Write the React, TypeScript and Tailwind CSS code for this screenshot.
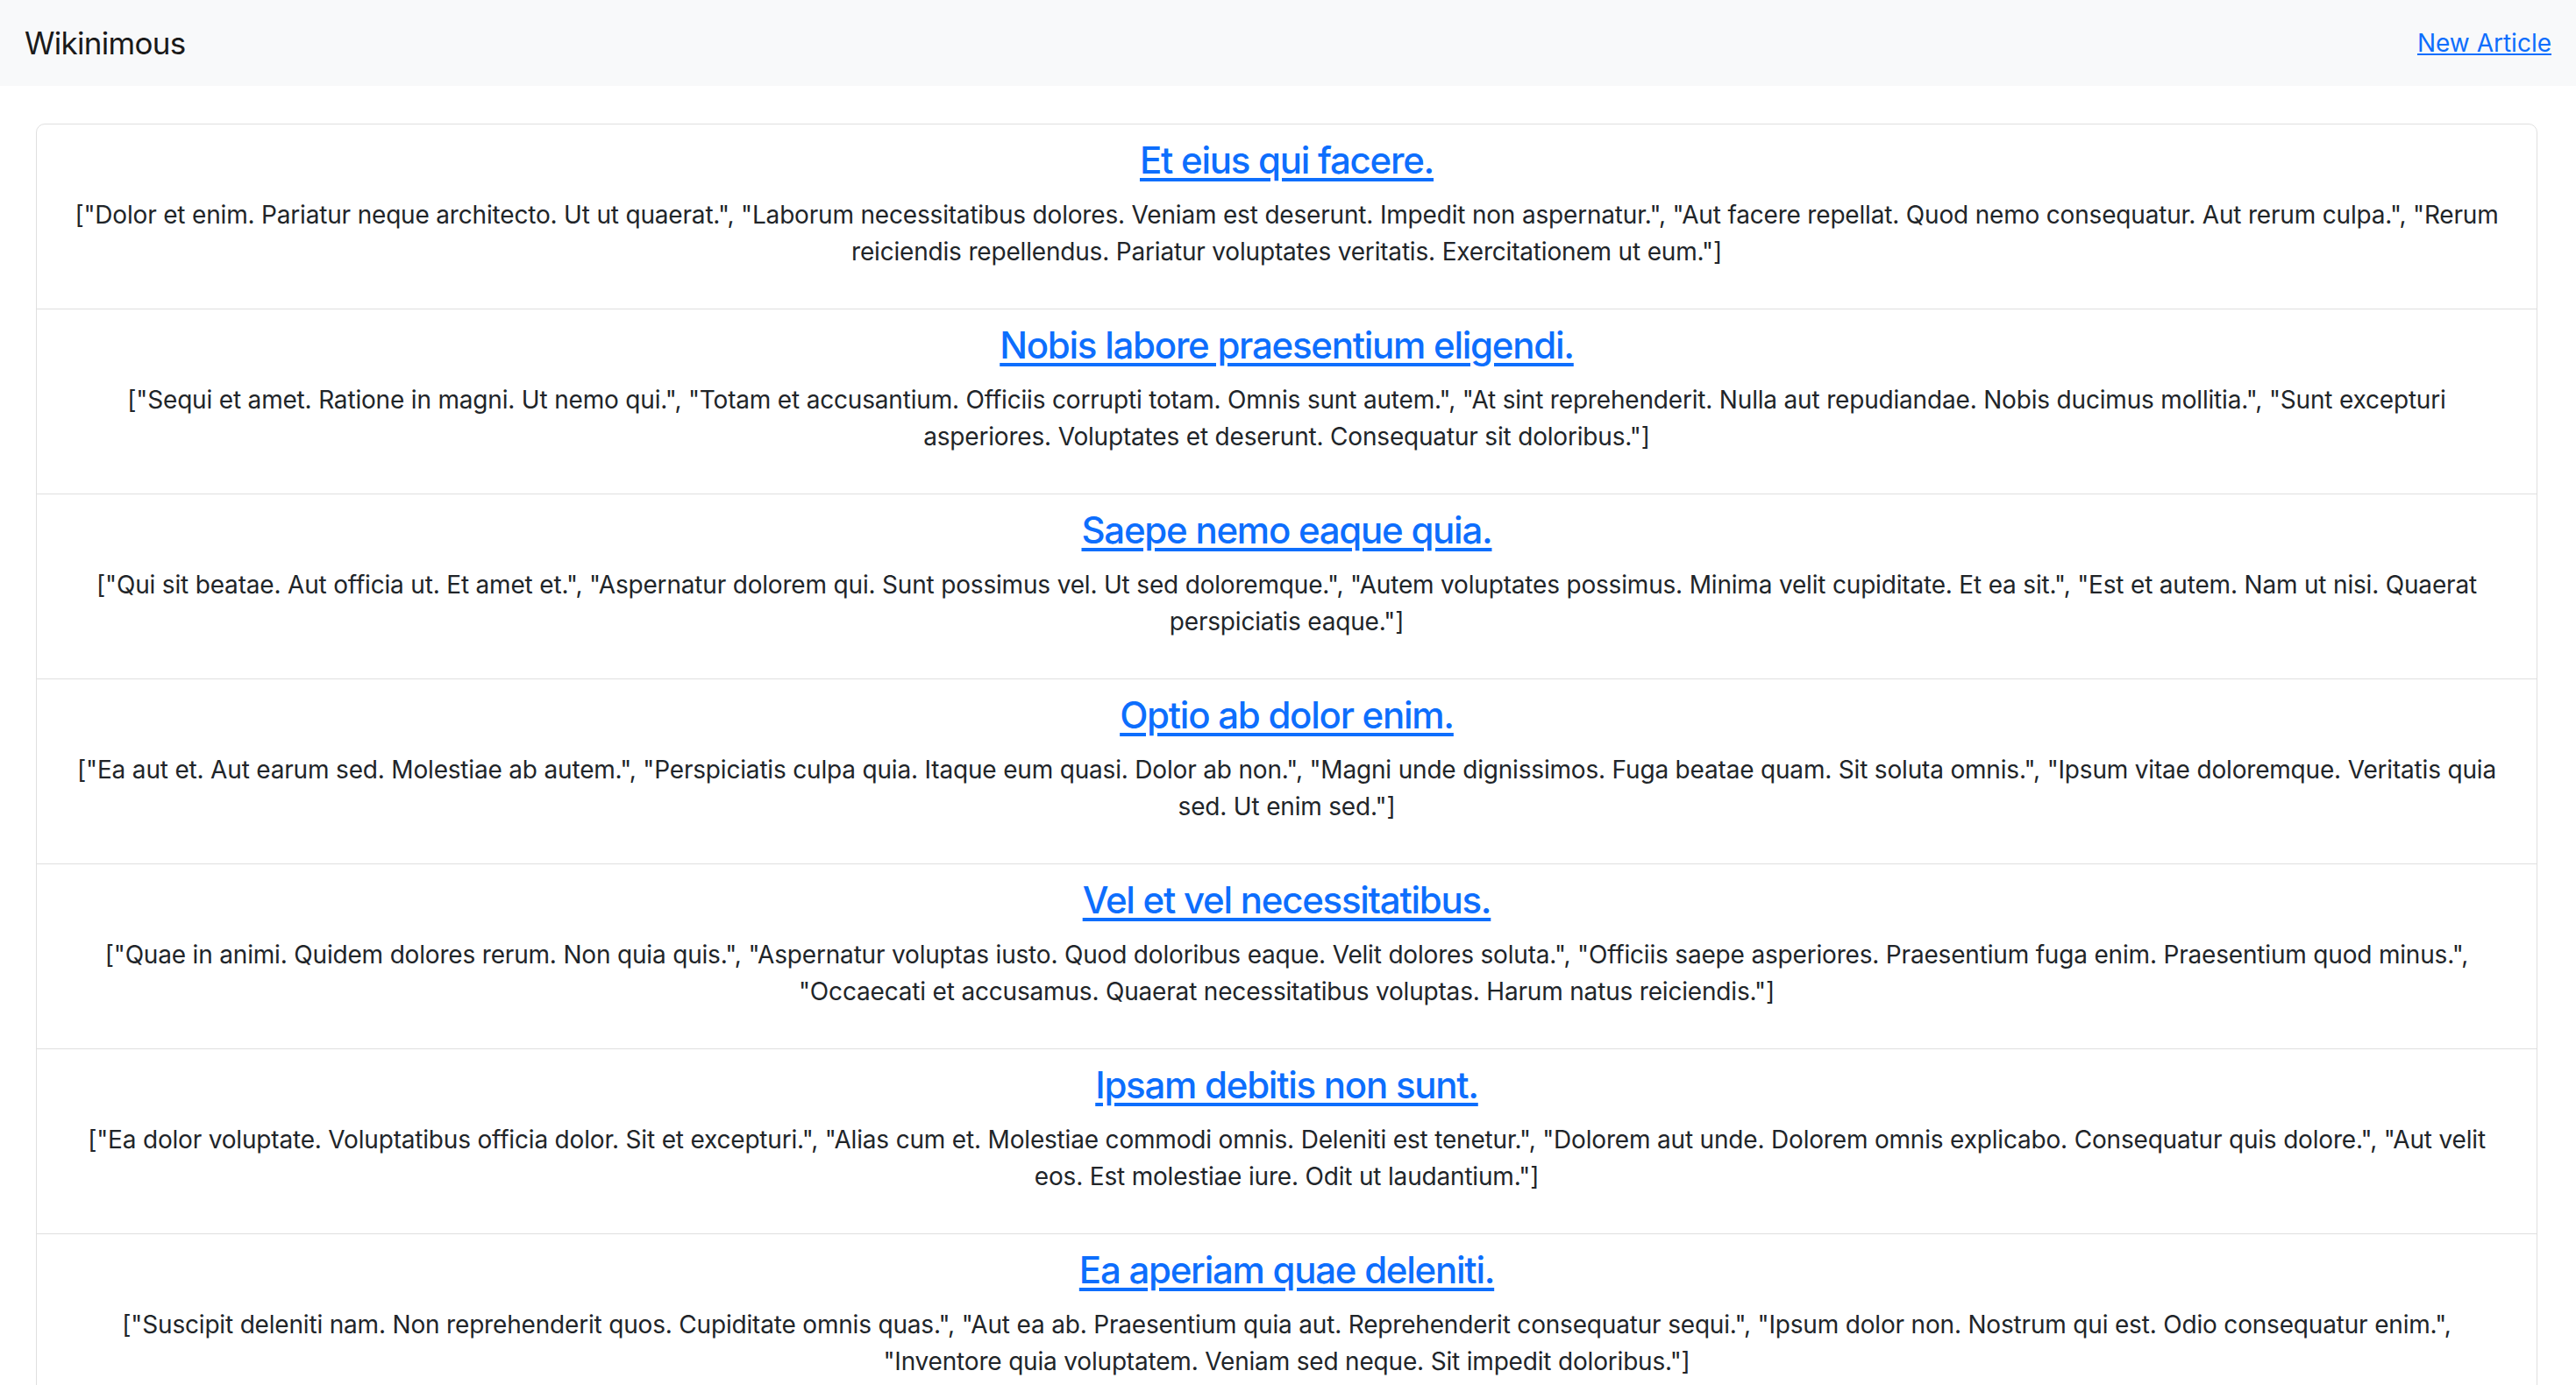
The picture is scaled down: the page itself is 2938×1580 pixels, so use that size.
const articles = [
  {
    title: 'Et eius qui facere.',
    body: '["Dolor et enim. Pariatur neque architecto. Ut ut quaerat.", "Laborum necessitatibus dolores. Veniam est deserunt. Impedit non aspernatur.", "Aut facere repellat. Quod nemo consequatur. Aut rerum culpa.", "Rerum reiciendis repellendus. Pariatur voluptates veritatis. Exercitationem ut eum."]',
  },
  {
    title: 'Nobis labore praesentium eligendi.',
    body: '["Sequi et amet. Ratione in magni. Ut nemo qui.", "Totam et accusantium. Officiis corrupti totam. Omnis sunt autem.", "At sint reprehenderit. Nulla aut repudiandae. Nobis ducimus mollitia.", "Sunt excepturi asperiores. Voluptates et deserunt. Consequatur sit doloribus."]',
  },
  {
    title: 'Saepe nemo eaque quia.',
    body: '["Qui sit beatae. Aut officia ut. Et amet et.", "Aspernatur dolorem qui. Sunt possimus vel. Ut sed doloremque.", "Autem voluptates possimus. Minima velit cupiditate. Et ea sit.", "Est et autem. Nam ut nisi. Quaerat perspiciatis eaque."]',
  },
  {
    title: 'Optio ab dolor enim.',
    body: '["Ea aut et. Aut earum sed. Molestiae ab autem.", "Perspiciatis culpa quia. Itaque eum quasi. Dolor ab non.", "Magni unde dignissimos. Fuga beatae quam. Sit soluta omnis.", "Ipsum vitae doloremque. Veritatis quia sed. Ut enim sed."]',
  },
  {
    title: 'Vel et vel necessitatibus.',
    body: '["Quae in animi. Quidem dolores rerum. Non quia quis.", "Aspernatur voluptas iusto. Quod doloribus eaque. Velit dolores soluta.", "Officiis saepe asperiores. Praesentium fuga enim. Praesentium quod minus.", "Occaecati et accusamus. Quaerat necessitatibus voluptas. Harum natus reiciendis."]',
  },
  {
    title: 'Ipsam debitis non sunt.',
    body: '["Ea dolor voluptate. Voluptatibus officia dolor. Sit et excepturi.", "Alias cum et. Molestiae commodi omnis. Deleniti est tenetur.", "Dolorem aut unde. Dolorem omnis explicabo. Consequatur quis dolore.", "Aut velit eos. Est molestiae iure. Odit ut laudantium."]',
  },
  {
    title: 'Ea aperiam quae deleniti.',
    body: '["Suscipit deleniti nam. Non reprehenderit quos. Cupiditate omnis quas.", "Aut ea ab. Praesentium quia aut. Reprehenderit consequatur sequi.", "Ipsum dolor non. Nostrum qui est. Odio consequatur enim.", "Inventore quia voluptatem. Veniam sed neque. Sit impedit doloribus."]',
  },
];

export default function App() {
  return (
    <div className="min-h-screen bg-white text-[#212529] font-['Inter','Liberation_Sans',sans-serif]">
      <nav className="flex h-[98px] items-center justify-between bg-[#f8f9fa] px-[28px]">
        <span className="text-[35px] leading-[52px] tracking-[-0.02em] text-[#1a1a1a]">Wikinimous</span>
        <a href="#" className="text-[28px] leading-[42px] text-[#0d6efd] underline">
          New Article
        </a>
      </nav>

      <main className="pt-[43px] pl-[41px] pr-[44px]">
        <ul className="rounded-[10px] border border-[#dfdfdf]">
          {articles.map((a, i) => (
            <li
              key={i}
              className="border-b border-[#dfdfdf] px-[28px] pt-[16px] pb-[16px] text-center last:border-b-0"
            >
              <h4 className="mb-[16px] text-[42px] leading-[50px] font-medium tracking-[-0.03em]">
                <a href="#" className="text-[#0d6efd] underline underline-offset-[5px]">
                  {a.title}
                </a>
              </h4>
              <p className="mb-[28px] text-[28px] leading-[42px] tracking-[-0.0065em]">{a.body}</p>
            </li>
          ))}
        </ul>
      </main>
    </div>
  );
}
